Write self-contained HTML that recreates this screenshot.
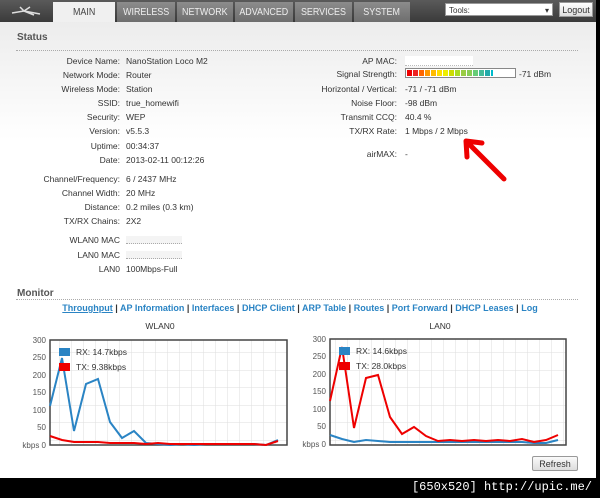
<!DOCTYPE html><html><head><style>
body{margin:0;width:600px;height:498px;overflow:hidden;background:#000;font-family:"Liberation Sans",sans-serif;font-size:8.5px;color:#333;position:relative}
.pg{position:absolute;left:0;top:0;width:596px;height:478px;background:linear-gradient(#e9e9e9,#fff 140px,#fff)}
.top{position:absolute;left:0;top:0;width:596px;height:22px;background:linear-gradient(#5a5a5a,#3a3a3a)}
.tab{position:absolute;top:2px;height:20px;background:linear-gradient(#8c8c8c,#6e6e6e);color:#eee;font-size:10.5px;text-align:center;line-height:20px}
.tab span{display:inline-block;transform:scaleX(.85)}
.tab.on{background:#f0f0f0;color:#444}
.a{position:absolute;white-space:nowrap}
.l{text-align:right;width:120px}
.r{text-align:right;width:397px}
h3{position:absolute;margin:0;font-size:10px;color:#555;font-weight:bold}
.dl{position:absolute;left:16px;width:562px;border-top:1px dotted #aaa}
.lk{position:absolute;top:303px;left:0;width:600px;text-align:center;font-size:9px;font-weight:bold;color:#2a84c4}
.lk span{color:#333}
</style></head><body>
<div class="pg"></div>
<div class="top"></div>
<svg class="a" style="left:10px;top:5px" width="32" height="12"><path d="M2 8 L14 6 L10 2 M14 6 L20 2 M14 6 L30 9 M14 6 L24 10" stroke="#ddd" stroke-width="1.5" fill="none"/></svg>
<div class="tab on" style="left:53px;width:62px"><span>MAIN</span></div>
<div class="tab" style="left:117px;width:58px"><span>WIRELESS</span></div>
<div class="tab" style="left:177px;width:56px"><span>NETWORK</span></div>
<div class="tab" style="left:235px;width:58px"><span>ADVANCED</span></div>
<div class="tab" style="left:295px;width:57px"><span>SERVICES</span></div>
<div class="tab" style="left:354px;width:56px"><span>SYSTEM</span></div>
<div class="a" style="left:445px;top:3px;width:108px;height:13px;background:#fff;border:1px solid #999;font-size:8px;line-height:13px;padding-left:3px;box-sizing:border-box">Tools:<span style="position:absolute;right:3px">▾</span></div>
<div class="a" style="left:559px;top:2px;width:34px;height:15px;background:linear-gradient(#fff,#ddd);border:1px solid #999;font-size:9px;line-height:15px;text-align:center;box-sizing:border-box">Logout</div>
<h3 style="left:17px;top:32px">Status</h3><div class="dl" style="top:50px"></div>
<div class="a l" style="top:56px">Device Name:</div><div class="a" style="left:126px;top:56px">NanoStation Loco M2</div>
<div class="a l" style="top:70px">Network Mode:</div><div class="a" style="left:126px;top:70px">Router</div>
<div class="a l" style="top:84px">Wireless Mode:</div><div class="a" style="left:126px;top:84px">Station</div>
<div class="a l" style="top:98px">SSID:</div><div class="a" style="left:126px;top:98px">true_homewifi</div>
<div class="a l" style="top:112px">Security:</div><div class="a" style="left:126px;top:112px">WEP</div>
<div class="a l" style="top:126px">Version:</div><div class="a" style="left:126px;top:126px">v5.5.3</div>
<div class="a l" style="top:141px">Uptime:</div><div class="a" style="left:126px;top:141px">00:34:37</div>
<div class="a l" style="top:155px">Date:</div><div class="a" style="left:126px;top:155px">2013-02-11 00:12:26</div>
<div class="a l" style="top:174px">Channel/Frequency:</div><div class="a" style="left:126px;top:174px">6 / 2437 MHz</div>
<div class="a l" style="top:188px">Channel Width:</div><div class="a" style="left:126px;top:188px">20 MHz</div>
<div class="a l" style="top:202px">Distance:</div><div class="a" style="left:126px;top:202px">0.2 miles (0.3 km)</div>
<div class="a l" style="top:216px">TX/RX Chains:</div><div class="a" style="left:126px;top:216px">2X2</div>
<div class="a l" style="top:235px">WLAN0 MAC</div><div class="a" style="left:126px;top:236px;width:56px;height:7px;background:#f4f4f4;border-bottom:1px dotted #aaa"></div>
<div class="a l" style="top:250px">LAN0 MAC</div><div class="a" style="left:126px;top:251px;width:56px;height:7px;background:#f4f4f4;border-bottom:1px dotted #aaa"></div>
<div class="a l" style="top:264px">LAN0</div><div class="a" style="left:126px;top:264px">100Mbps-Full</div>
<div class="a r" style="top:56px">AP MAC:</div><div class="a" style="left:405px;top:56px;width:68px;height:9px;background:#fff;border-bottom:1px dotted #bbb"></div>
<div class="a r" style="top:69px">Signal Strength:</div>
<svg class="a" style="left:405px;top:68px" width="112" height="10"><rect x=".5" y=".5" width="110" height="9" fill="#fff" stroke="#888"/>
<g><rect x="2" y="2" width="5" height="6" fill="#e00"/><rect x="8" y="2" width="5" height="6" fill="#e22"/><rect x="14" y="2" width="5" height="6" fill="#f60"/><rect x="20" y="2" width="5" height="6" fill="#f90"/><rect x="26" y="2" width="5" height="6" fill="#fb0"/><rect x="32" y="2" width="5" height="6" fill="#fd0"/><rect x="38" y="2" width="5" height="6" fill="#ee0"/><rect x="44" y="2" width="5" height="6" fill="#cd0"/><rect x="50" y="2" width="5" height="6" fill="#ad2"/><rect x="56" y="2" width="5" height="6" fill="#9c4"/><rect x="62" y="2" width="5" height="6" fill="#8c5"/><rect x="68" y="2" width="5" height="6" fill="#6c7"/><rect x="74" y="2" width="5" height="6" fill="#4b9"/><rect x="80" y="2" width="5" height="6" fill="#2aa"/><rect x="86" y="2" width="2" height="6" fill="#0bc"/></g></svg>
<div class="a" style="left:519px;top:69px">-71 dBm</div>
<div class="a r" style="top:84px">Horizontal / Vertical:</div><div class="a" style="left:405px;top:84px">-71 / -71 dBm</div>
<div class="a r" style="top:98px">Noise Floor:</div><div class="a" style="left:405px;top:98px">-98 dBm</div>
<div class="a r" style="top:112px">Transmit CCQ:</div><div class="a" style="left:405px;top:112px">40.4 %</div>
<div class="a r" style="top:126px">TX/RX Rate:</div><div class="a" style="left:405px;top:126px">1 Mbps / 2 Mbps</div>
<div class="a r" style="top:149px">airMAX:</div><div class="a" style="left:405px;top:149px">-</div>
<svg class="a" style="left:460px;top:135px" width="50" height="50"><path d="M6 6 L44 44 M6 6 L7 22 M6 6 L22 8" stroke="#e00" stroke-width="5" stroke-linecap="round" fill="none"/></svg>
<h3 style="left:17px;top:288px">Monitor</h3><div class="dl" style="top:299px"></div>
<div class="lk"><u>Throughput</u> <span>|</span> AP Information <span>|</span> Interfaces <span>|</span> DHCP Client <span>|</span> ARP Table <span>|</span> Routes <span>|</span> Port Forward <span>|</span> DHCP Leases <span>|</span> Log</div>
<svg class="a" style="left:0;top:318px" width="596" height="160" font-family="Liberation Sans" font-size="8">
<text x="160" y="11" text-anchor="middle" font-size="8.5" fill="#333">WLAN0</text>
<text x="440" y="11" text-anchor="middle" font-size="8.5" fill="#333">LAN0</text>
<g fill="#555" text-anchor="end" font-size="8"><text x="46" y="25">300</text><text x="46" y="42">250</text><text x="46" y="60">200</text><text x="46" y="77">150</text><text x="46" y="95">100</text><text x="46" y="112">50</text><text x="46" y="130">kbps 0</text>
<text x="326" y="24">300</text><text x="326" y="41">250</text><text x="326" y="59">200</text><text x="326" y="76">150</text><text x="326" y="94">100</text><text x="326" y="111">50</text><text x="326" y="129">kbps 0</text></g>
<defs><pattern id="g" width="12" height="17.5" patternUnits="userSpaceOnUse"><path d="M12 0V17.5M0 17.5H12" stroke="#ddd" stroke-width="1" fill="none"/></pattern></defs>
<rect x="50" y="22" width="237" height="105" fill="url(#g)" stroke="#444" stroke-width="1.5"/>
<rect x="330" y="21" width="236" height="106" fill="url(#g)" stroke="#444" stroke-width="1.5"/>
<polyline fill="none" stroke="#2a84c4" stroke-width="2" points="50,88 62,40 74,113 86,66 98,61 110,104 122,120 134,113 146,125 158,126 170,127 182,126 194,127 206,126 218,126 230,126 242,126 254,126 266,127 278,122"/>
<polyline fill="none" stroke="#e00" stroke-width="2" points="50,118 62,122 74,124 86,124 98,124 110,125 122,125 134,125 146,126 158,125 170,126 182,126 194,126 206,126 218,126 230,126 242,126 254,126 266,127 278,123"/>
<polyline fill="none" stroke="#2a84c4" stroke-width="2" points="330,117 342,121 354,124 366,122 378,123 390,124 402,124 414,124 426,124 438,124 450,124 462,124 474,124 486,124 498,124 510,124 522,124 534,125 546,125 558,122"/>
<polyline fill="none" stroke="#e00" stroke-width="2" points="330,83 342,29 354,110 366,60 378,57 390,99 402,116 414,109 426,118 438,123 450,122 462,123 474,122 486,123 498,122 510,123 522,121 534,124 546,122 558,117"/>
<rect x="59" y="30" width="11" height="8" fill="#2a84c4"/><text x="76" y="37" fill="#333" font-size="8.5">RX: 14.7kbps</text>
<rect x="59" y="45" width="11" height="8" fill="#e00"/><text x="76" y="52" fill="#333" font-size="8.5">TX: 9.38kbps</text>
<rect x="339" y="29" width="11" height="8" fill="#2a84c4"/><text x="356" y="36" fill="#333" font-size="8.5">RX: 14.6kbps</text>
<rect x="339" y="44" width="11" height="8" fill="#e00"/><text x="356" y="51" fill="#333" font-size="8.5">TX: 28.0kbps</text>
</svg>
<div class="a" style="left:532px;top:456px;width:46px;height:15px;background:linear-gradient(#fafafa,#ddd);border:1px solid #999;border-radius:2px;font-size:9px;line-height:15px;text-align:center;box-sizing:border-box">Refresh</div>
<div class="a" style="right:8px;top:480px;color:#fff;font-family:'Liberation Mono',monospace;font-size:12px">[650x520] http://upic.me/</div>
</body></html>
